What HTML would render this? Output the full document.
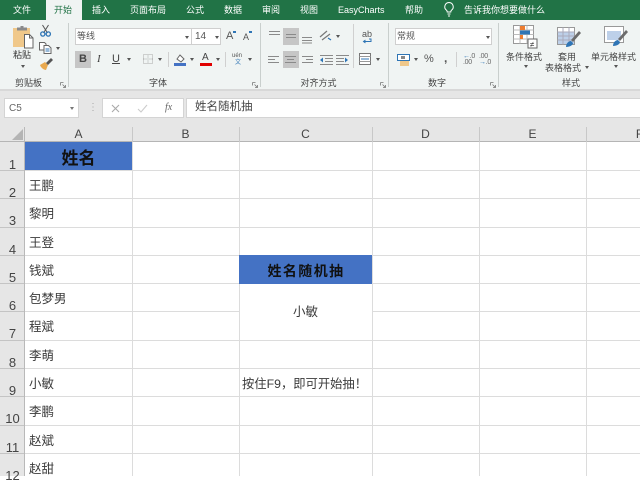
<!DOCTYPE html>
<html lang="zh"><head><meta charset="utf-8"><title>Excel</title>
<style>
html,body{margin:0;padding:0}
body{width:640px;height:476px;overflow:hidden;position:relative;background:#fff;font-family:"Liberation Sans","Noto Sans CJK SC",sans-serif;color:#444}
.a{position:absolute;box-sizing:border-box}
.t{position:absolute;white-space:nowrap;line-height:1}
.tab{position:absolute;top:3px;color:#fff;font-size:9px;line-height:14px;white-space:nowrap;text-align:center}
.rh{position:absolute;left:0;width:25px;text-align:center;font-size:13px;color:#444;line-height:15px}
.ch{position:absolute;top:127px;height:15px;text-align:center;font-size:12px;color:#444;line-height:15px}
.cell{position:absolute;left:29px;font-size:12.5px;color:#3a3a3a;line-height:16px;white-space:nowrap}
.l{position:absolute;background:#dcdcdc}
.sep{position:absolute;top:23px;width:1px;height:64px;background:#c9cfcd}
.lbl{position:absolute;top:77px;font-size:9px;color:#444;line-height:12px;white-space:nowrap;text-align:center}
.ar{position:absolute;width:0;height:0;border-left:2px solid transparent;border-right:2px solid transparent;border-top:3px solid #555}
.rl{position:absolute;font-size:9px;color:#444;line-height:12px;white-space:nowrap;text-align:center}
svg{position:absolute;overflow:visible}
</style></head><body>

<!-- title tabs -->
<div class="a" style="left:0;top:0;width:640px;height:20px;background:#217346"></div>
<div class="a" style="left:46px;top:0;width:36px;height:21px;background:#f0f4f3"></div>
<div class="tab" style="left:13px">文件</div>
<div class="tab" style="left:54px;color:#217346">开始</div>
<div class="tab" style="left:92px">插入</div>
<div class="tab" style="left:130px">页面布局</div>
<div class="tab" style="left:186px">公式</div>
<div class="tab" style="left:224px">数据</div>
<div class="tab" style="left:262px">审阅</div>
<div class="tab" style="left:300px">视图</div>
<div class="tab" style="left:338px">EasyCharts</div>
<div class="tab" style="left:405px">帮助</div>
<svg style="left:442px;top:1px" width="14" height="16" viewBox="0 0 14 16"><path d="M7 1.500a4.300 4.300 0 0 0-2.400 7.800c.5.400.6 1 .6 1.700h3.600c0-.7.100-1.300.6-1.700A4.300 4.300 0 0 0 7 1.500zM5.500 13h3M6 15h2" fill="none" stroke="#fff" stroke-width="1"/></svg>
<div class="tab" style="left:464px">告诉我你想要做什么</div>

<!-- ribbon -->
<div class="a" style="left:0;top:20px;width:640px;height:70px;background:#f0f4f3"></div>
<div class="a" style="left:0;top:89px;width:640px;height:2px;background:#d8d8d8"></div>
<div class="sep" style="left:68px"></div>
<div class="sep" style="left:260px"></div>
<div class="sep" style="left:388px"></div>
<div class="sep" style="left:498px"></div>

<!-- clipboard -->
<svg style="left:13px;top:26px" width="21" height="23" viewBox="0 0 21 23">
<rect x="0" y="2" width="17" height="19" fill="#f0c88a"/>
<rect x="4" y="1.500" width="10" height="3" fill="#8a8a8a"/><rect x="7.500" y="0" width="3" height="2" fill="#8a8a8a"/>
<path d="M11.500 8.500h5l3.500 3.500v10h-8.500z" fill="#fff" stroke="#666" stroke-width="1"/>
<path d="M16.500 8.500v3.500h3.500" fill="none" stroke="#666"/>
</svg>
<div class="t" style="left:13px;top:51px;font-size:9px;color:#333">粘贴</div>
<div class="ar" style="left:21px;top:65px"></div>
<svg style="left:40px;top:25px" width="12" height="12" viewBox="0 0 12 12"><path d="M2.500 0l5 8M8.500 0l-5 8" stroke="#555" fill="none"/><circle cx="2.800" cy="9" r="2.100" fill="none" stroke="#2f75b5" stroke-width="1.300"/><circle cx="8.300" cy="9" r="2.100" fill="none" stroke="#2f75b5" stroke-width="1.300"/></svg>
<svg style="left:39px;top:42px" width="13" height="12" viewBox="0 0 13 12"><path d="M.5.500h5l1.500 1.500v6h-6.500z" fill="#fff" stroke="#666"/><path d="M5 3.500h4.500l2.500 2.500v5.500h-7z" fill="#fff" stroke="#666"/><path d="M6.500 7h4M6.500 9h4" stroke="#2f75b5"/></svg>
<div class="ar" style="left:56px;top:47px"></div>
<svg style="left:40px;top:58px" width="13" height="12" viewBox="0 0 13 12"><path d="M0 7l5-3 3 3-2 5c-2 0-5-2-6-5z" fill="#e9a94f"/><path d="M6 5l5-5 2 2-5 5z" fill="#555"/></svg>
<div class="lbl" style="left:15px;width:27px">剪贴板</div>
<svg style="left:60px;top:82px" width="6" height="6" viewBox="0 0 6 6"><path d="M.5.500h3M.500.500v3M5.500 5.500L2.500 2.500M5.500 3v2.500H3" stroke="#777" fill="none" stroke-width=".8"/></svg>

<!-- font -->
<div class="a" style="left:75px;top:28px;width:117px;height:17px;background:#fff;border:1px solid #cfcfcf"></div>
<div class="a" style="left:191px;top:28px;width:30px;height:17px;background:#fff;border:1px solid #cfcfcf"></div>
<div class="t" style="left:77px;top:32px;font-size:9px;color:#555">等线</div>
<div class="ar" style="left:185px;top:36px"></div>
<div class="t" style="left:195px;top:32px;font-size:10px;color:#555">14</div>
<div class="ar" style="left:215px;top:36px"></div>
<div class="t" style="left:226px;top:31px;font-size:11px;color:#555">A</div>
<div class="a" style="left:233px;top:31px;width:3px;height:2px;background:#2f75b5"></div>
<div class="t" style="left:243px;top:33px;font-size:9px;color:#555">A</div>
<div class="a" style="left:249px;top:31px;width:3px;height:2px;background:#2f75b5"></div>
<div class="a" style="left:75px;top:51px;width:16px;height:17px;background:#c6c6c6"></div>
<div class="t" style="left:79px;top:54px;font-size:11px;font-weight:bold;color:#444">B</div>
<div class="t" style="left:97px;top:54px;font-size:11px;font-style:italic;font-family:'Liberation Serif',serif;color:#444">I</div>
<div class="t" style="left:112px;top:54px;font-size:11px;color:#444;text-decoration:underline">U</div>
<div class="ar" style="left:127px;top:58px"></div>
<svg style="left:143px;top:54px" width="10" height="10" viewBox="0 0 10 10"><path d="M.5.500h9v9h-9zM5 .5v9M.5 5h9" fill="none" stroke="#aaa" stroke-dasharray="1 1"/></svg>
<div class="ar" style="left:158px;top:58px"></div>
<div class="a" style="left:168px;top:52px;width:1px;height:15px;background:#d0d0d0"></div>
<svg style="left:174px;top:53px" width="12" height="13" viewBox="0 0 12 13"><path d="M3 6l3-4 4 4-3 3z" fill="#fff" stroke="#666"/><rect x="0" y="10" width="12" height="3" fill="#4472c4"/></svg>
<div class="ar" style="left:190px;top:58px"></div>
<div class="t" style="left:202px;top:53px;font-size:10px;color:#444">A</div>
<div class="a" style="left:200px;top:63px;width:12px;height:3px;background:#e00000"></div>
<div class="ar" style="left:216px;top:58px"></div>
<div class="a" style="left:225px;top:52px;width:1px;height:15px;background:#d0d0d0"></div>
<div class="t" style="left:232px;top:53px;font-size:6px;color:#555">uén</div>
<div class="t" style="left:235px;top:60px;font-size:6px;color:#2f75b5">文</div>
<div class="ar" style="left:248px;top:58px"></div>
<div class="lbl" style="left:149px;width:18px">字体</div>
<svg style="left:252px;top:82px" width="6" height="6" viewBox="0 0 6 6"><path d="M.5.500h3M.500.500v3M5.500 5.500L2.500 2.500M5.500 3v2.500H3" stroke="#777" fill="none" stroke-width=".8"/></svg>

<!-- alignment -->
<div class="a" style="left:283px;top:28px;width:16px;height:17px;background:#c6c6c6"></div>
<div class="a" style="left:283px;top:51px;width:16px;height:17px;background:#c6c6c6"></div>
<svg style="left:268px;top:29px" width="60" height="16" viewBox="0 0 60 16"><path d="M1 2.500h11M1 5.500h11M18 5.500h10M18 8.500h10M34 8.500h10M34 11.500h10M34 14h10" stroke="#8a8a8a"/></svg>
<svg style="left:268px;top:54px" width="110" height="12" viewBox="0 0 110 12"><path d="M0 2.500h11M0 5.500h7M0 8.500h11M17 2.500h11M19 5.500h7M17 8.500h11M34 2.500h11M38 5.500h7M34 8.500h11" stroke="#8a8a8a"/><path d="M52 1.500h13M57 4.500h8M57 7.500h8M52 10.500h13M68 1.500h13M68 4.500h8M68 7.500h8M68 10.500h13" stroke="#8a8a8a" stroke-width=".9"/><path d="M55 3.500l-3 2.500 3 2.500zM77 3.500l3 2.500-3 2.500z" fill="#2f75b5"/></svg>
<svg style="left:319px;top:29px" width="14" height="13" viewBox="0 0 14 13"><path d="M1 8l7-6M3 11l8-6" stroke="#777" stroke-width="1.200"/><path d="M9 9l3 2" stroke="#2f75b5" stroke-width="1.200"/></svg>
<div class="ar" style="left:336px;top:35px"></div>
<div class="a" style="left:353px;top:24px;width:1px;height:44px;background:#d0d0d0"></div>
<div class="t" style="left:362px;top:30px;font-size:9px;color:#555">ab</div>
<svg style="left:361px;top:38px" width="12" height="6" viewBox="0 0 12 6"><path d="M8 1h2v2.500H3M4.500 2L2.500 3.500 4.500 5" stroke="#2f75b5" fill="none"/></svg>
<svg style="left:359px;top:53px" width="12" height="12" viewBox="0 0 12 12"><rect x=".5" y=".5" width="11" height="11" fill="#fff" stroke="#777"/><path d="M.5 3.500h11M.5 8.500h11" stroke="#999"/><path d="M2 6h8" stroke="#2f75b5"/></svg>
<div class="ar" style="left:376px;top:58px"></div>
<div class="lbl" style="left:300px;width:37px">对齐方式</div>
<svg style="left:380px;top:82px" width="6" height="6" viewBox="0 0 6 6"><path d="M.5.500h3M.500.500v3M5.500 5.500L2.500 2.500M5.500 3v2.500H3" stroke="#777" fill="none" stroke-width=".8"/></svg>

<!-- number -->
<div class="a" style="left:395px;top:28px;width:97px;height:17px;background:#fff;border:1px solid #cfcfcf"></div>
<div class="t" style="left:397px;top:32px;font-size:9px;color:#555">常规</div>
<div class="ar" style="left:486px;top:36px"></div>
<svg style="left:397px;top:54px" width="14" height="12" viewBox="0 0 14 12"><rect x=".5" y=".5" width="12" height="6" fill="#fff" stroke="#2f75b5"/><rect x="3" y="7" width="9" height="5" fill="#f0c88a"/><rect x="4" y="2" width="4" height="3" fill="#888"/></svg>
<div class="ar" style="left:414px;top:58px"></div>
<div class="t" style="left:424px;top:54px;font-size:11px;color:#555">%</div>
<div class="t" style="left:444px;top:52px;font-size:12px;font-weight:bold;color:#555">,</div>
<div class="a" style="left:456px;top:52px;width:1px;height:15px;background:#d0d0d0"></div>
<div class="t" style="left:463px;top:54px;font-size:7px;line-height:6px;color:#666;white-space:pre-line;letter-spacing:-.3px"><span style="color:#2f75b5">←</span>.0
.00</div>
<div class="t" style="left:479px;top:54px;font-size:7px;line-height:6px;color:#666;white-space:pre-line;letter-spacing:-.3px">.00
<span style="color:#2f75b5">→</span>.0</div>
<div class="lbl" style="left:428px;width:18px">数字</div>
<svg style="left:490px;top:82px" width="6" height="6" viewBox="0 0 6 6"><path d="M.5.500h3M.500.500v3M5.500 5.500L2.500 2.500M5.500 3v2.500H3" stroke="#777" fill="none" stroke-width=".8"/></svg>

<!-- styles -->
<svg style="left:513px;top:25px" width="24" height="24" viewBox="0 0 24 24">
<rect x=".5" y=".5" width="20" height="18" fill="#fff" stroke="#999"/>
<path d="M.5 5h20M.5 9.500h20M.5 14h20M7 .5v18M14 .5v18" stroke="#bbb"/>
<rect x="7" y="1" width="5" height="4" fill="#ed7d31"/><rect x="7" y="5.500" width="10" height="4" fill="#2f75b5"/><rect x="7" y="10" width="3" height="4" fill="#ed7d31"/>
<rect x="15" y="14" width="9" height="9" fill="#fff" stroke="#666"/>
<text x="17" y="22" font-size="8" fill="#333" font-family="Liberation Sans">≠</text>
</svg>
<div class="rl" style="left:506px;top:51px;width:36px">条件格式</div>
<div class="ar" style="left:524px;top:65px"></div>
<svg style="left:557px;top:27px" width="24" height="21" viewBox="0 0 24 21">
<rect x=".5" y=".5" width="17" height="17" fill="#fff" stroke="#999"/>
<rect x="1" y="5" width="16" height="12" fill="#bdd0e9"/>
<path d="M.5 5h17M.5 9h17M.5 13h17M6 .5v17M12 .5v17" stroke="#aab"/>
<path d="M14 13l8-9 2 2-8 9z" fill="#6b6b6b"/><path d="M9 20c0-4 3-6 5-6l2 2c0 2-3 4-7 4z" fill="#2f75b5"/>
</svg>
<div class="rl" style="left:558px;top:51px;width:18px">套用</div>
<div class="rl" style="left:545px;top:62px;width:36px">表格格式</div>
<div class="ar" style="left:585px;top:66px"></div>
<svg style="left:604px;top:26px" width="24" height="21" viewBox="0 0 24 21">
<rect x=".5" y=".5" width="19" height="16" fill="#fff" stroke="#999"/>
<rect x="3" y="5" width="14" height="9" fill="#bdd0e9"/>
<path d="M14 13l8-9 2 2-8 9z" fill="#6b6b6b"/><path d="M9 20c0-4 3-6 5-6l2 2c0 2-3 4-7 4z" fill="#2f75b5"/>
</svg>
<div class="rl" style="left:591px;top:51px;width:45px">单元格样式</div>
<div class="ar" style="left:614px;top:65px"></div>
<div class="lbl" style="left:562px;width:18px">样式</div>

<!-- formula bar -->
<div class="a" style="left:0;top:91px;width:640px;height:36px;background:#e6e6e6"></div>
<div class="a" style="left:4px;top:98px;width:75px;height:20px;background:#fff;border:1px solid #d4d4d4"></div>
<div class="t" style="left:9px;top:104px;font-size:10px;color:#666">C5</div>
<div class="ar" style="left:70px;top:107px;border-top-color:#777"></div>
<div class="t" style="left:88px;top:103px;font-size:10px;color:#aaa">⋮</div>
<div class="a" style="left:102px;top:98px;width:82px;height:20px;background:#fff;border:1px solid #d4d4d4"></div>
<svg style="left:111px;top:104px" width="40" height="10" viewBox="0 0 40 10"><path d="M1 1l7 7M8 1L1 8" stroke="#aaa" stroke-width="1.100" fill="none"/><path d="M27 5l3 3 6-7" stroke="#ccc" stroke-width="1.100" fill="none"/></svg>
<div class="t" style="left:165px;top:103px;font-size:10px;font-style:italic;font-family:'Liberation Serif',serif;color:#666">fx</div>
<div class="a" style="left:186px;top:98px;width:456px;height:20px;background:#fff;border:1px solid #d4d4d4"></div>
<div class="t" style="left:195px;top:102px;font-size:11.500px;color:#444">姓名随机抽</div>

<!-- headers -->
<div class="a" style="left:0;top:123px;width:640px;height:19px;background:#e6e6e6"></div>
<div class="a" style="left:0;top:142px;width:25px;height:334px;background:#e6e6e6"></div>
<div class="a" style="left:24px;top:127px;width:1px;height:349px;background:#b9b9b9"></div>
<div class="a" style="left:0;top:141px;width:640px;height:1px;background:#b5b5b5"></div>
<svg style="left:12px;top:129px" width="12" height="12" viewBox="0 0 12 12"><path d="M11 0v11H0z" fill="#b4b4b4"/></svg>
<div class="ch" style="left:25px;width:107px">A</div>
<div class="ch" style="left:132px;width:107px">B</div>
<div class="ch" style="left:239px;width:133px">C</div>
<div class="ch" style="left:372px;width:107px">D</div>
<div class="ch" style="left:479px;width:107px">E</div>
<div class="ch" style="left:586px;width:107px">F</div>
<div class="l" style="left:132px;top:127px;width:1px;height:15px;background:#c8c8c8"></div>
<div class="l" style="left:239px;top:127px;width:1px;height:15px;background:#c8c8c8"></div>
<div class="l" style="left:372px;top:127px;width:1px;height:15px;background:#c8c8c8"></div>
<div class="l" style="left:479px;top:127px;width:1px;height:15px;background:#c8c8c8"></div>
<div class="l" style="left:586px;top:127px;width:1px;height:15px;background:#c8c8c8"></div>

<!-- grid horizontal -->
<div class="l" style="left:25px;top:170px;width:615px;height:1px"></div>
<div class="l" style="left:25px;top:198px;width:615px;height:1px"></div>
<div class="l" style="left:25px;top:227px;width:615px;height:1px"></div>
<div class="l" style="left:25px;top:255px;width:615px;height:1px"></div>
<div class="l" style="left:25px;top:283px;width:615px;height:1px"></div>
<div class="l" style="left:25px;top:311px;width:214px;height:1px"></div>
<div class="l" style="left:373px;top:311px;width:267px;height:1px"></div>
<div class="l" style="left:25px;top:340px;width:615px;height:1px"></div>
<div class="l" style="left:25px;top:368px;width:615px;height:1px"></div>
<div class="l" style="left:25px;top:396px;width:615px;height:1px"></div>
<div class="l" style="left:25px;top:425px;width:615px;height:1px"></div>
<div class="l" style="left:25px;top:453px;width:615px;height:1px"></div>
<!-- row header lines -->
<div class="l" style="left:0;top:170px;width:24px;height:1px;background:#c4c4c4"></div>
<div class="l" style="left:0;top:198px;width:24px;height:1px;background:#c4c4c4"></div>
<div class="l" style="left:0;top:227px;width:24px;height:1px;background:#c4c4c4"></div>
<div class="l" style="left:0;top:255px;width:24px;height:1px;background:#c4c4c4"></div>
<div class="l" style="left:0;top:283px;width:24px;height:1px;background:#c4c4c4"></div>
<div class="l" style="left:0;top:311px;width:24px;height:1px;background:#c4c4c4"></div>
<div class="l" style="left:0;top:340px;width:24px;height:1px;background:#c4c4c4"></div>
<div class="l" style="left:0;top:368px;width:24px;height:1px;background:#c4c4c4"></div>
<div class="l" style="left:0;top:396px;width:24px;height:1px;background:#c4c4c4"></div>
<div class="l" style="left:0;top:425px;width:24px;height:1px;background:#c4c4c4"></div>
<div class="l" style="left:0;top:453px;width:24px;height:1px;background:#c4c4c4"></div>
<!-- grid vertical -->
<div class="l" style="left:132px;top:142px;width:1px;height:334px"></div>
<div class="l" style="left:239px;top:142px;width:1px;height:334px"></div>
<div class="l" style="left:372px;top:142px;width:1px;height:334px"></div>
<div class="l" style="left:479px;top:142px;width:1px;height:334px"></div>
<div class="l" style="left:586px;top:142px;width:1px;height:334px"></div>

<!-- row numbers -->
<div class="rh" style="top:157px">1</div>
<div class="rh" style="top:185px">2</div>
<div class="rh" style="top:213px">3</div>
<div class="rh" style="top:242px">4</div>
<div class="rh" style="top:270px">5</div>
<div class="rh" style="top:298px">6</div>
<div class="rh" style="top:326px">7</div>
<div class="rh" style="top:355px">8</div>
<div class="rh" style="top:383px">9</div>
<div class="rh" style="top:411px">10</div>
<div class="rh" style="top:440px">11</div>
<div class="rh" style="top:468px">12</div>

<!-- header cells -->
<div class="a" style="left:25px;top:142px;width:107px;height:28px;background:#4472c4"></div>
<div class="t" style="left:25px;top:150px;width:107px;text-align:center;font-size:17px;font-weight:bold;color:#111">姓名</div>
<div class="a" style="left:239px;top:255px;width:133px;height:29px;background:#4472c4"></div>
<div class="t" style="left:239px;top:264px;width:134px;text-align:center;font-size:14px;font-weight:bold;color:#111;letter-spacing:1.400px">姓名随机抽</div>

<!-- col A -->
<div class="cell" style="top:178px">王鹏</div>
<div class="cell" style="top:206px">黎明</div>
<div class="cell" style="top:235px">王登</div>
<div class="cell" style="top:263px">钱斌</div>
<div class="cell" style="top:291px">包梦男</div>
<div class="cell" style="top:319px">程斌</div>
<div class="cell" style="top:348px">李萌</div>
<div class="cell" style="top:376px">小敏</div>
<div class="cell" style="top:404px">李鹏</div>
<div class="cell" style="top:433px">赵斌</div>
<div class="cell" style="top:461px">赵甜</div>

<!-- col C -->
<div class="cell" style="left:239px;top:304px;width:133px;text-align:center">小敏</div>
<div class="cell" style="left:242px;top:376px;font-size:12.300px">按住F9，即可开始抽！</div>

</body></html>
